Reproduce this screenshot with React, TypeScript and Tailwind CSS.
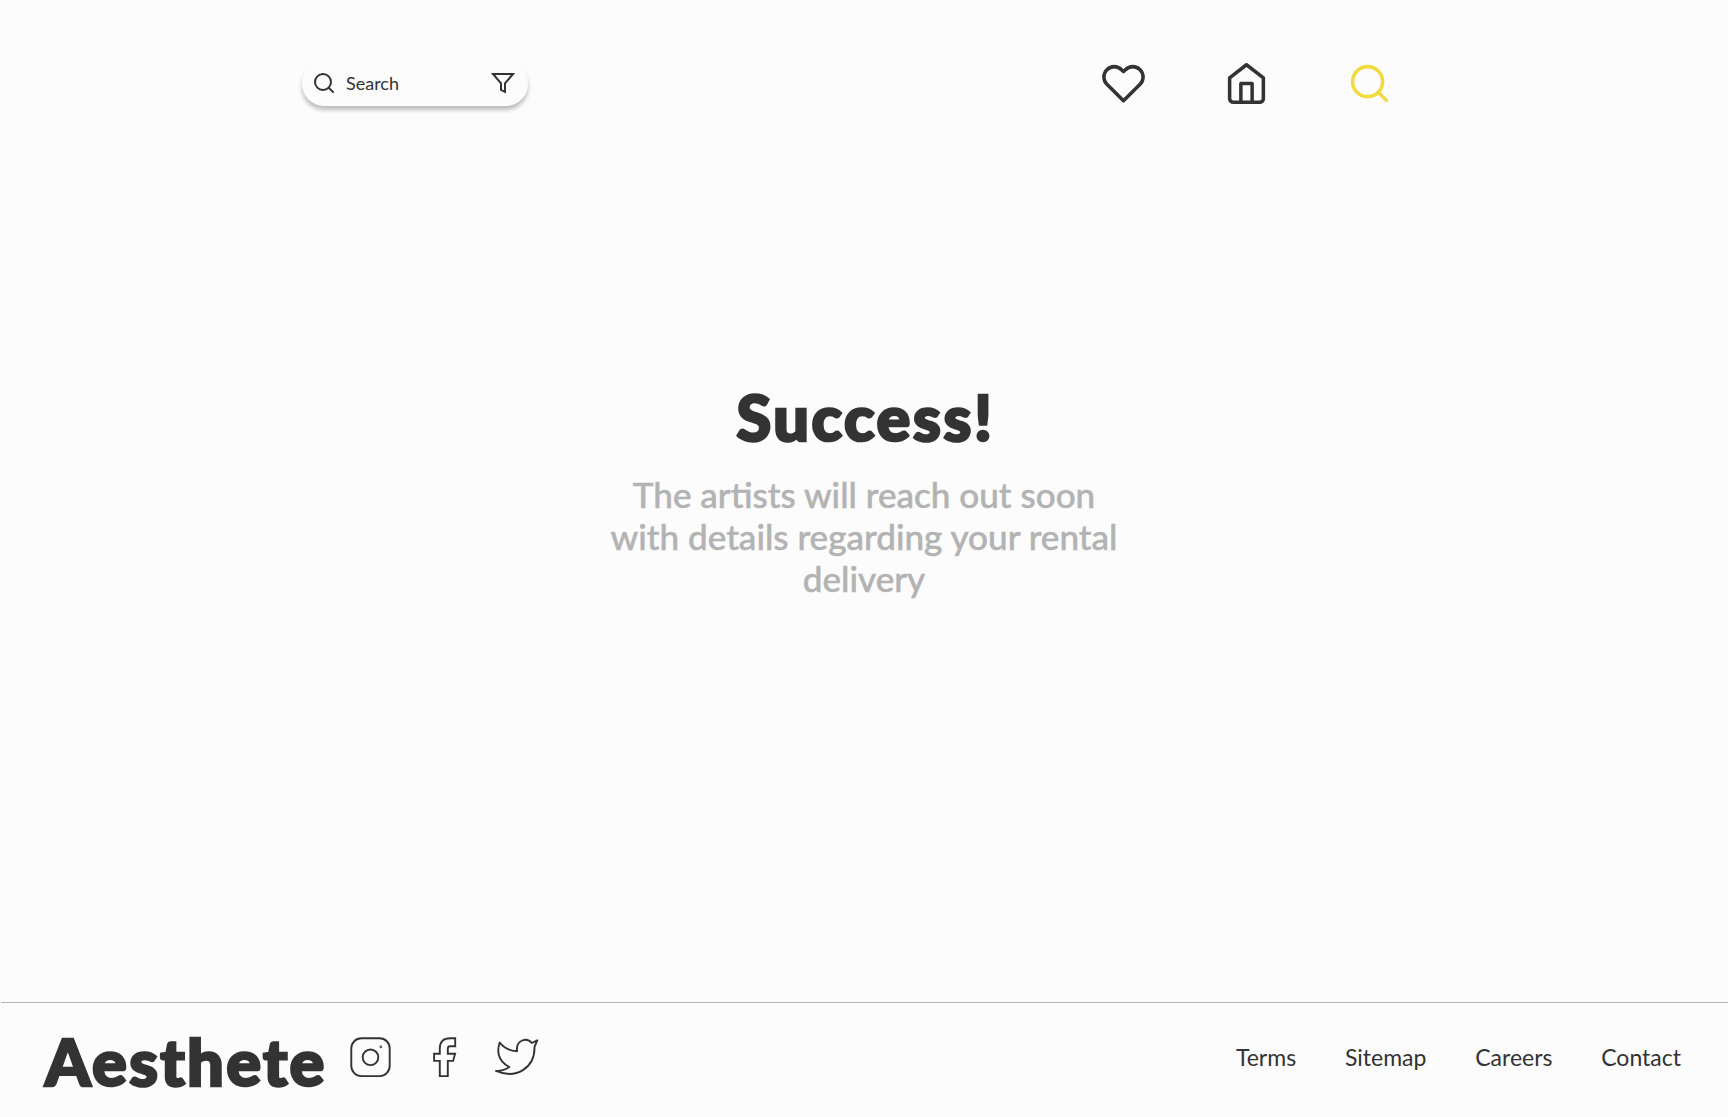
import React from "react";

const stroke = {
  fill: "none",
  stroke: "currentColor",
  strokeLinecap: "round" as const,
  strokeLinejoin: "round" as const,
};

function SearchIcon({ className, width = 2 }: { className: string; width?: number }) {
  return (
    <svg viewBox="0 0 24 24" className={className} {...stroke} strokeWidth={width}>
      <circle cx="11" cy="11" r="8" />
      <path d="M21 21l-4.35-4.35" />
    </svg>
  );
}

export default function App() {
  return (
    <div className="flex h-[1117px] w-full flex-col overflow-hidden bg-[#fcfcfc] font-['Lato',sans-serif] text-[#333333]">
      <header className="flex items-start justify-between pt-[61px] pr-[336px] pl-[302px]">
        <div className="flex h-[45px] w-[226px] items-center rounded-[22px] bg-[#fcfcfc] pr-[13px] pb-px pl-[10px] shadow-[0_4px_4px_rgba(0,0,0,0.25)]">
          <SearchIcon className="size-6" />
          <span className="mb-px ml-2.5 text-[18px] leading-6">Search</span>
          <svg viewBox="0 0 24 24" className="ml-auto size-6" {...stroke} strokeLinejoin="miter" strokeWidth={2}>
            <path d="M22 3H2l8 9.46V19l4 2v-8.54L22 3z" />
          </svg>
        </div>
        <nav className="flex gap-[78px]">
          <svg viewBox="0 0 24 24" className="size-[45px]" {...stroke} strokeWidth={1.875}>
            <path d="M20.84 4.61a5.5 5.5 0 0 0-7.78 0L12 5.67l-1.06-1.06a5.5 5.5 0 0 0-7.78 7.78l1.06 1.06L12 21.23l7.78-7.78 1.06-1.06a5.5 5.5 0 0 0 0-7.78z" />
          </svg>
          <svg viewBox="0 0 24 24" className="size-[45px]" {...stroke} strokeWidth={1.875}>
            <path d="M3 9l9-7 9 7v11a2 2 0 0 1-2 2H5a2 2 0 0 1-2-2z" />
            <path d="M9 22V12h6v10" />
          </svg>
          <SearchIcon className="size-[45px] text-[#f0db3f]" width={1.875} />
        </nav>
      </header>

      <main className="flex flex-1 flex-col items-center pt-[272px] text-center">
        <h1 className="pl-[3px] text-[63px] leading-[77px] font-black tracking-[2.6px] [-webkit-text-stroke:2.6px_#333333]">
          Success!
        </h1>
        <p className="mt-[18px] w-[540px] text-[35.1px] leading-[42px] font-medium text-[#b3b3b3] [-webkit-text-stroke:0.5px_#b3b3b3]">
          The artists will reach out soon
          <br />
          with details regarding your rental
          <br />
          delivery
        </p>
      </main>

      <footer className="ml-px flex h-[115px] items-start border-t border-[#b3b3b3] pr-[47px] pl-[44px]">
        <div className="mt-[20px] w-[280px] text-[65px] leading-[77px] font-black tracking-[2.3px] whitespace-nowrap [-webkit-text-stroke:2.6px_#333333]">
          Aesthete
        </div>
        <div className="mt-[30px] ml-[20px] flex">
          <svg viewBox="0 0 50 48" className="h-12 w-[50px]" {...stroke} strokeWidth={1.9}>
            <rect x="6.3" y="5.3" width="38.4" height="37.8" rx="10" />
            <circle cx="25.5" cy="24.3" r="7.8" />
            <circle cx="35.8" cy="13.8" r="0.4" />
          </svg>
          <svg viewBox="0 0 40 48" className="ml-[30px] h-12 w-10" {...stroke} strokeLinejoin="miter" strokeWidth={1.9}>
            <path d="M30.2 5.3v8h-5q-2.4 0-2.4 2.4v5h7.3l-2 7.2h-5.3v15.2h-8V27.9H9.1v-7.2h5.7v-4.8q0-10.6 10.5-10.6z" />
          </svg>
          <svg viewBox="0 0 52 48" className="ml-[25px] h-12 w-[52px]" {...stroke} strokeWidth={1.9}>
            <path d="M47.3 7.3l-5.5 2.7c-2.5-3-6-4-9.5-2.5c-4 1.7-5.7 5-5.3 9.5v1.2c-7-.3-13-3-17.3-8.7c-2.5 7-3 18 9.6 24.5c-4 2.8-8.5 4.2-13.3 3.9c20 8.9 39-3 38.5-24.1z" />
          </svg>
        </div>
        <nav className="mt-[40px] ml-auto flex gap-[48.8px] text-[23px] leading-7">
          <a>Terms</a>
          <a>Sitemap</a>
          <a>Careers</a>
          <a>Contact</a>
        </nav>
      </footer>
    </div>
  );
}
